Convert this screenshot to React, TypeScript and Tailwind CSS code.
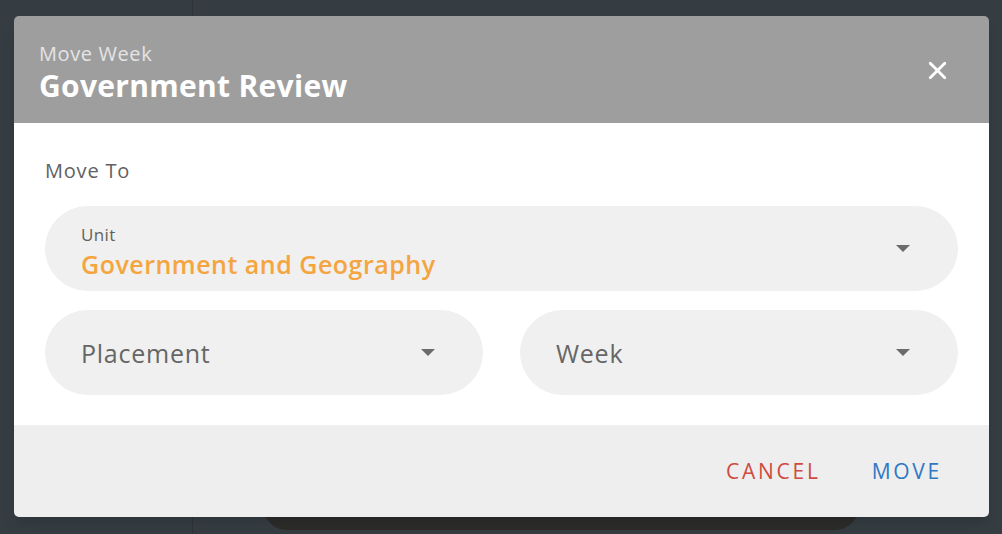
import { X } from 'lucide-react';

function Caret() {
  return (
    <svg width="14" height="8" viewBox="0 0 14 8" className="shrink-0">
      <path d="M0 0 L14 0 L7 7 Z" fill="#6b6b6b" />
    </svg>
  );
}

function Select({ label, value, placeholder }: { label?: string; value?: string; placeholder?: string }) {
  return (
    <div className="flex h-[85px] flex-1 items-center justify-between rounded-full bg-[#f0f0f0] pl-[36px] pr-[48px]">
      {value ? (
        <div className="flex flex-col self-start pt-[19px]">
          <span className="text-[17px] leading-[20px] tracking-[0.02em] text-[#616161]">{label}</span>
          <span className="mt-[4px] text-[25px] font-semibold leading-[30px] tracking-[0.02em] text-[#f5a540]">
            {value}
          </span>
        </div>
      ) : (
        <span className="text-[25px] leading-[30px] tracking-[0.03em] text-[#666666]">{placeholder}</span>
      )}
      <Caret />
    </div>
  );
}

export default function App() {
  return (
    <div
      className="relative h-[534px] w-full overflow-hidden bg-[#353d42] pl-[14px] pt-[16px]"
      style={{ fontFamily: '"Open Sans", "Noto Sans", sans-serif' }}
    >
      {/* content behind the overlay */}
      <div className="absolute bottom-[4px] left-[263px] h-[40px] w-[596px] rounded-b-[24px] bg-[#2c2c2a]" />
      <div className="absolute left-[192px] top-0 h-full w-px bg-[#2e3438]" />

      <div className="relative flex h-[501px] w-[975px] flex-col overflow-hidden rounded-[5px] shadow-lg">
        <header className="flex h-[107px] items-start justify-between bg-[#9e9e9e] pl-[25px] pr-[37px] pt-[26px]">
          <div className="flex flex-col">
            <span className="text-[20px] leading-[24px] tracking-[0.03em] text-[#e4e4e4]">Move Week</span>
            <span className="mt-[2px] text-[30px] font-bold leading-[36px] tracking-[0.01em] text-white">
              Government Review
            </span>
          </div>
          <X size={29} strokeWidth={2.3} color="#ffffff" className="mt-[14px]" />
        </header>

        <main className="flex flex-1 flex-col bg-white px-[31px] pt-[36px]">
          <p className="text-[20px] leading-[24px] tracking-[0.04em] text-[#616161]">Move To</p>
          <div className="mt-[23px] flex">
            <Select label="Unit" value="Government and Geography" />
          </div>
          <div className="mt-[19px] flex gap-[37px]">
            <Select placeholder="Placement" />
            <Select placeholder="Week" />
          </div>
        </main>

        <footer className="flex h-[92px] items-center justify-end gap-[51px] bg-[#eeeeee] pr-[47px] pt-[2px]">
          <button className="text-[21px] font-medium tracking-[0.13em] text-[#cf4a3f]">CANCEL</button>
          <button className="text-[21px] font-medium tracking-[0.13em] text-[#2f78c4]">MOVE</button>
        </footer>
      </div>
    </div>
  );
}
